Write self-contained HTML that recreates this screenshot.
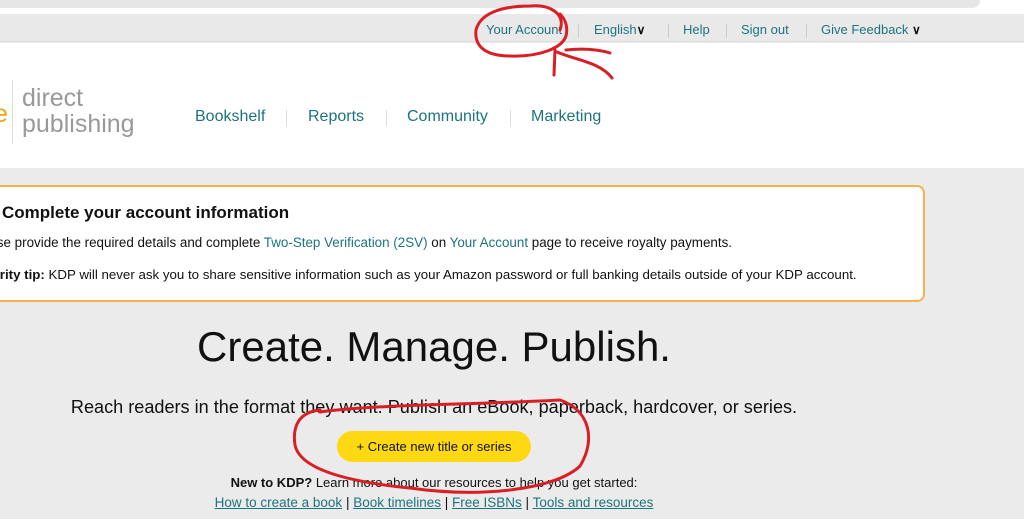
<!DOCTYPE html>
<html><head><meta charset="utf-8"><style>
*{margin:0;padding:0;box-sizing:border-box}
body{width:1024px;height:519px;overflow:hidden;background:#ebebeb;font-family:"Liberation Sans",sans-serif;position:relative}
.abs{position:absolute;white-space:nowrap}
.teal{color:#1d747e}
a{color:#1d747e;text-decoration:none}
</style></head><body>
<div class="abs" style="left:0;top:0;width:1024px;height:14px;background:#fff"></div>
<div class="abs" style="left:0;top:0;width:980px;height:8px;background:#e6e6e6;border-radius:0 0 14px 0"></div>
<div class="abs" style="left:0;top:14px;width:1024px;height:28px;background:#e9e9e9;border-bottom:1px solid #ddd"></div>
<div class="abs teal" style="left:486px;top:22px;font-size:13px">Your Account</div>
<div class="abs" style="left:578px;top:24px;width:1px;height:14px;background:#ccc"></div>
<div class="abs teal" style="left:594px;top:22px;font-size:13px">English<span style="color:#111;font-size:12px;font-weight:bold">&#x2228;</span></div>
<div class="abs" style="left:668px;top:24px;width:1px;height:14px;background:#ccc"></div>
<div class="abs teal" style="left:683px;top:22px;font-size:13px">Help</div>
<div class="abs" style="left:726px;top:24px;width:1px;height:14px;background:#ccc"></div>
<div class="abs teal" style="left:741px;top:22px;font-size:13px">Sign out</div>
<div class="abs" style="left:806px;top:24px;width:1px;height:14px;background:#ccc"></div>
<div class="abs teal" style="left:821px;top:22px;font-size:13px">Give Feedback <span style="color:#111;font-size:12px;font-weight:bold">&#x2228;</span></div>
<div class="abs" style="left:0;top:43px;width:1024px;height:125px;background:#fff"></div>
<div class="abs" style="left:-6px;top:100px;font-size:25px;color:#f0a30a">e</div>
<div class="abs" style="left:12px;top:80px;width:1px;height:64px;background:#ddd"></div>
<div class="abs" style="left:22px;top:85px;font-size:25px;color:#999;line-height:26px">direct<br>publishing</div>
<div class="abs teal" style="left:195px;top:108px;font-size:16px">Bookshelf</div>
<div class="abs" style="left:286px;top:110px;width:1px;height:16px;background:#ddd"></div>
<div class="abs teal" style="left:308px;top:108px;font-size:16px">Reports</div>
<div class="abs" style="left:386px;top:110px;width:1px;height:16px;background:#ddd"></div>
<div class="abs teal" style="left:407px;top:108px;font-size:16px">Community</div>
<div class="abs" style="left:510px;top:110px;width:1px;height:16px;background:#ddd"></div>
<div class="abs teal" style="left:531px;top:108px;font-size:16px">Marketing</div>
<div class="abs" style="left:-20px;top:185px;width:945px;height:117px;background:#fff;border:2px solid #f4b34a;border-radius:8px"></div>
<div class="abs" style="left:2px;top:203px;font-size:17px;font-weight:bold;color:#111">Complete your account information</div>
<div class="abs" style="left:-30px;top:235px;font-size:13.4px;color:#111">Please provide the required details and complete <span class="teal">Two-Step Verification (2SV)</span> on <span class="teal">Your Account</span> page to receive royalty payments.</div>
<div class="abs" style="left:-32px;top:267px;font-size:13.3px;color:#111"><b>Security tip:</b> KDP will never ask you to share sensitive information such as your Amazon password or full banking details outside of your KDP account.</div>
<div class="abs" style="left:0;width:868px;top:323px;text-align:center;font-size:42px;color:#111">Create. Manage. Publish.</div>
<div class="abs" style="left:0;width:868px;top:397px;text-align:center;font-size:18.1px;color:#111">Reach readers in the format they want. Publish an eBook, paperback, hardcover, or series.</div>
<div class="abs" style="left:337px;top:431px;width:194px;height:31px;background:#ffd814;border-radius:16px;text-align:center;line-height:31px;font-size:13px;color:#111">+ Create new title or series</div>
<div class="abs" style="left:0;width:868px;top:475px;text-align:center;font-size:13px;color:#111"><b>New to KDP?</b> Learn more about our resources to help you get started:</div>
<div class="abs" style="left:0;width:868px;top:495px;text-align:center;font-size:13.5px;color:#111"><a style="text-decoration:underline">How to create a book</a> | <a style="text-decoration:underline">Book timelines</a> | <a style="text-decoration:underline">Free ISBNs</a> | <a style="text-decoration:underline">Tools and resources</a></div>
<svg class="abs" style="left:0;top:0" width="1024" height="519" fill="none" stroke="#d81f26" stroke-width="3" stroke-linecap="round">
<path d="M560 30 C566 14 550 4 530 6 C500 6 480 14 476 30 C474 48 488 56 510 56 C540 57 562 48 566 36 C568 28 566 20 560 14"/>
<path d="M566 50 C585 48 600 50 610 53 M555 50 L554 75 M557 52 C575 60 600 62 612 78"/>
<path d="M320 412 C380 404 470 405 560 400 C590 410 596 440 580 466 C555 490 480 498 410 488 C350 482 300 470 295 445 C292 425 300 412 320 410"/>
</svg>
</body></html>
